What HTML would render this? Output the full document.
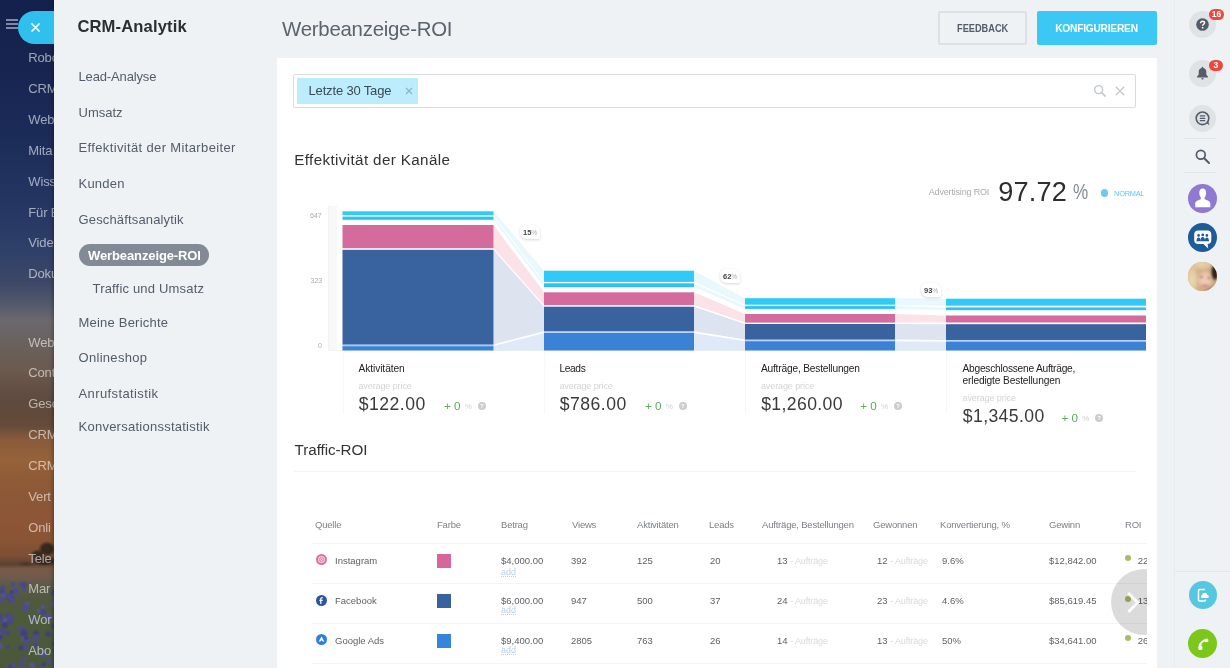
<!DOCTYPE html>
<html lang="de">
<head>
<meta charset="utf-8">
<title>CRM-Analytik</title>
<style>
*{box-sizing:border-box;margin:0;padding:0}
html,body{width:1230px;height:668px;overflow:hidden}
html{background:#eef2f4}
body{font-family:"Liberation Sans",sans-serif;background:#eef2f4;position:relative;color:#333;filter:blur(.45px)}
.abs{position:absolute}
.t{position:absolute;white-space:nowrap;line-height:1}
/* left strip */
#strip{left:0;top:0;width:58px;height:668px;overflow:hidden;
background:radial-gradient(circle at 24px 633px,#3f3f7c 0,#3f3f7c 1.5px,rgba(74,74,140,0) 4.9px),
radial-gradient(circle at 24px 659px,#4a4a8c 0,#4a4a8c 0.9px,rgba(74,74,140,0) 3.2px),
radial-gradient(circle at 26px 638px,#3f3f7c 0,#3f3f7c 0.9px,rgba(74,74,140,0) 3.1px),
radial-gradient(circle at 16px 591px,#4b4b90 0,#4b4b90 1.4px,rgba(74,74,140,0) 4.6px),
radial-gradient(circle at 33px 618px,#4a4a8c 0,#4a4a8c 1.1px,rgba(74,74,140,0) 3.8px),
radial-gradient(circle at 36px 638px,#4b4b90 0,#4b4b90 1.4px,rgba(74,74,140,0) 4.7px),
radial-gradient(circle at 1px 600px,#4b4b90 0,#4b4b90 1.0px,rgba(74,74,140,0) 3.3px),
radial-gradient(circle at 43px 612px,#454588 0,#454588 1.2px,rgba(74,74,140,0) 4.1px),
radial-gradient(circle at 28px 640px,#4b4b90 0,#4b4b90 1.2px,rgba(74,74,140,0) 3.9px),
radial-gradient(circle at 25px 608px,#4b4b90 0,#4b4b90 1.5px,rgba(74,74,140,0) 5.1px),
radial-gradient(circle at 39px 611px,#525298 0,#525298 1.0px,rgba(74,74,140,0) 3.3px),
radial-gradient(circle at -0px 633px,#4b4b90 0,#4b4b90 0.9px,rgba(74,74,140,0) 3.0px),
radial-gradient(circle at 47px 617px,#4b4b90 0,#4b4b90 1.5px,rgba(74,74,140,0) 5.0px),
radial-gradient(circle at 10px 666px,#3f3f7c 0,#3f3f7c 0.8px,rgba(74,74,140,0) 2.8px),
radial-gradient(circle at 55px 618px,#454588 0,#454588 0.9px,rgba(74,74,140,0) 2.9px),
radial-gradient(circle at 43px 607px,#525298 0,#525298 0.9px,rgba(74,74,140,0) 2.9px),
radial-gradient(circle at -1px 619px,#454588 0,#454588 1.5px,rgba(74,74,140,0) 4.9px),
radial-gradient(circle at 12px 592px,#3f3f7c 0,#3f3f7c 0.9px,rgba(74,74,140,0) 2.8px),
radial-gradient(circle at 8px 633px,#454588 0,#454588 1.1px,rgba(74,74,140,0) 3.8px),
radial-gradient(circle at 55px 651px,#3f3f7c 0,#3f3f7c 1.1px,rgba(74,74,140,0) 3.7px),
radial-gradient(circle at 5px 620px,#525298 0,#525298 1.0px,rgba(74,74,140,0) 3.2px),
radial-gradient(circle at 48px 670px,#4b4b90 0,#4b4b90 1.2px,rgba(74,74,140,0) 4.1px),
radial-gradient(circle at 10px 618px,#4a4a8c 0,#4a4a8c 1.4px,rgba(74,74,140,0) 4.8px),
radial-gradient(circle at 4px 671px,#525298 0,#525298 1.0px,rgba(74,74,140,0) 3.2px),
radial-gradient(circle at -1px 637px,#3f3f7c 0,#3f3f7c 1.4px,rgba(74,74,140,0) 4.7px),
radial-gradient(circle at 2px 591px,#454588 0,#454588 1.2px,rgba(74,74,140,0) 4.1px),
radial-gradient(circle at -1px 616px,#454588 0,#454588 1.3px,rgba(74,74,140,0) 4.2px),
radial-gradient(circle at 54px 626px,#3f3f7c 0,#3f3f7c 1.2px,rgba(74,74,140,0) 4.1px),
radial-gradient(circle at 9px 597px,#4a4a8c 0,#4a4a8c 1.5px,rgba(74,74,140,0) 4.9px),
radial-gradient(circle at 12px 600px,#4a4a8c 0,#4a4a8c 1.3px,rgba(74,74,140,0) 4.5px),
radial-gradient(circle at 9px 668px,#4a4a8c 0,#4a4a8c 1.4px,rgba(74,74,140,0) 4.8px),
radial-gradient(circle at 3px 587px,#4a4a8c 0,#4a4a8c 0.9px,rgba(74,74,140,0) 3.0px),
radial-gradient(circle at 54px 604px,#525298 0,#525298 1.3px,rgba(74,74,140,0) 4.4px),
radial-gradient(circle at 22px 664px,#4a4a8c 0,#4a4a8c 1.2px,rgba(74,74,140,0) 3.9px),
radial-gradient(circle at 8px 647px,#454588 0,#454588 0.9px,rgba(74,74,140,0) 2.9px),
radial-gradient(circle at 26px 641px,#4b4b90 0,#4b4b90 1.3px,rgba(74,74,140,0) 4.2px),
radial-gradient(circle at 14px 665px,#4b4b90 0,#4b4b90 1.0px,rgba(74,74,140,0) 3.2px),
radial-gradient(circle at 2px 620px,#4b4b90 0,#4b4b90 1.0px,rgba(74,74,140,0) 3.3px),
radial-gradient(circle at 8px 616px,#454588 0,#454588 1.2px,rgba(74,74,140,0) 4.1px),
radial-gradient(circle at 3px 595px,#525298 0,#525298 1.1px,rgba(74,74,140,0) 3.8px),
radial-gradient(circle at 36px 645px,#454588 0,#454588 1.2px,rgba(74,74,140,0) 4.1px),
radial-gradient(circle at 32px 665px,#525298 0,#525298 1.2px,rgba(74,74,140,0) 3.8px),
radial-gradient(circle at 39px 669px,#4b4b90 0,#4b4b90 0.8px,rgba(74,74,140,0) 2.8px),
radial-gradient(circle at 26px 648px,#4b4b90 0,#4b4b90 1.0px,rgba(74,74,140,0) 3.5px),
radial-gradient(circle at 2px 632px,#454588 0,#454588 1.3px,rgba(74,74,140,0) 4.5px),
radial-gradient(circle at 44px 664px,#3f3f7c 0,#3f3f7c 1.1px,rgba(74,74,140,0) 3.5px),
radial-gradient(circle at 50px 661px,#4b4b90 0,#4b4b90 1.1px,rgba(74,74,140,0) 3.7px),
radial-gradient(circle at 48px 634px,#3f3f7c 0,#3f3f7c 1.3px,rgba(74,74,140,0) 4.2px),
radial-gradient(circle at 20px 584px,#4b4b90 0,#4b4b90 0.9px,rgba(74,74,140,0) 2.9px),
radial-gradient(circle at 35px 671px,#525298 0,#525298 1.4px,rgba(74,74,140,0) 4.8px),
radial-gradient(circle at 21px 648px,#3f3f7c 0,#3f3f7c 1.2px,rgba(74,74,140,0) 4.1px),
radial-gradient(circle at 25px 631px,#4a4a8c 0,#4a4a8c 1.2px,rgba(74,74,140,0) 3.9px),
radial-gradient(circle at -0px 637px,#454588 0,#454588 1.2px,rgba(74,74,140,0) 3.9px),
radial-gradient(circle at 54px 593px,#3f3f7c 0,#3f3f7c 1.4px,rgba(74,74,140,0) 4.6px),
radial-gradient(circle at 13px 584px,#4a4a8c 0,#4a4a8c 1.0px,rgba(74,74,140,0) 3.4px),
radial-gradient(circle at 10px 598px,#3f3f7c 0,#3f3f7c 1.5px,rgba(74,74,140,0) 4.9px),
radial-gradient(circle at 27px 604px,#525298 0,#525298 1.1px,rgba(74,74,140,0) 3.7px),
radial-gradient(circle at 10px 621px,#454588 0,#454588 1.4px,rgba(74,74,140,0) 4.6px),
radial-gradient(circle at 49px 617px,#525298 0,#525298 1.2px,rgba(74,74,140,0) 4.1px),
radial-gradient(circle at 10px 595px,#4b4b90 0,#4b4b90 1.1px,rgba(74,74,140,0) 3.5px),
radial-gradient(circle at 39px 668px,#454588 0,#454588 1.0px,rgba(74,74,140,0) 3.4px),
radial-gradient(circle at 5px 625px,#3f3f7c 0,#3f3f7c 1.5px,rgba(74,74,140,0) 4.9px),
radial-gradient(circle at 20px 629px,#4a4a8c 0,#4a4a8c 1.3px,rgba(74,74,140,0) 4.3px),
radial-gradient(circle at 24px 590px,#4a4a8c 0,#4a4a8c 0.8px,rgba(74,74,140,0) 2.8px),
radial-gradient(circle at 0px 646px,#525298 0,#525298 1.2px,rgba(74,74,140,0) 4.1px),
radial-gradient(circle at 36px 633px,#3f3f7c 0,#3f3f7c 1.3px,rgba(74,74,140,0) 4.2px),
radial-gradient(circle at 24px 585px,#454588 0,#454588 1.4px,rgba(74,74,140,0) 4.7px),
radial-gradient(circle at 43px 654px,#4b4b90 0,#4b4b90 1.5px,rgba(74,74,140,0) 5.1px),
radial-gradient(circle at 24px 639px,#525298 0,#525298 1.3px,rgba(74,74,140,0) 4.3px),
radial-gradient(circle at 54px 644px,#3f3f7c 0,#3f3f7c 1.0px,rgba(74,74,140,0) 3.2px),
radial-gradient(ellipse 9px 8px at 47px 549px,#35291f 0,#35291f 55%,rgba(53,41,31,0) 100%),radial-gradient(ellipse 8px 6px at 38px 555px,#382b20 0,#382b20 50%,rgba(53,41,31,0) 100%),radial-gradient(ellipse 14px 5px at 44px 561px,#33271e 0,#33271e 55%,rgba(53,41,31,0) 100%),radial-gradient(ellipse 10px 3px at 26px 564px,#4a3527 0,rgba(74,53,39,0) 100%),
linear-gradient(180deg,#13204b 0px,#16244f 60px,#1b2b58 130px,#243562 200px,#2e3f68 250px,#3f4967 285px,#555a6c 305px,#6b686e 320px,#6a625f 340px,#6b5a4e 370px,#5e4a3e 400px,#644a39 425px,#895b3b 440px,#96623a 460px,#8f5b37 480px,#8c5736 500px,#8d5636 520px,#895435 540px,#7d4e34 556px,#5c4131 564px,#7a5a48 569px,#6e5b4c 578px,#5b5a48 586px,#51583f 600px,#4d5b3a 625px,#4a583a 668px)}
#strip .m{color:rgba(255,255,255,.58);font-size:13px;left:28.3px;letter-spacing:-.15px}
#panel{left:54px;top:0;width:1176px;height:668px;background:#eef2f4;box-shadow:-1px 0 4px rgba(0,0,0,.32)}
/* nav */
.nav{font-size:13px;color:#535c69;left:78.5px}
/* card */
#card{left:277px;top:58px;width:880px;height:620px;background:#fff}

.bd{background:#fff;border-radius:5px 7px 2px 7px;box-shadow:0 1px 3px rgba(0,0,0,.16)}
.ml{font-size:10.2px;color:#222}
.ap{font-size:9px;color:#d2d4d6;letter-spacing:-.09px}
.mv{font-size:17.6px;color:#3a3a3a}
.pl{font-size:11.7px;color:#5aab5a}
.pc{font-size:8px;color:#d0d0d0}
.q{width:8px;height:8px;border-radius:50%;background:#ccc;color:#fff;font-size:6px;line-height:8px;text-align:center;font-weight:bold}
.th{font-size:9.5px;color:#7d8186;letter-spacing:-.2px}
.td{font-size:9.5px;color:#5c5f63}
.lt{color:#d9dadb;font-size:9px;letter-spacing:-.15px}
.ad{font-size:9px;color:#b9d0e8;border-bottom:1px dotted #b9d0e8;line-height:.9}
.gd{width:6px;height:6px;border-radius:50%;background:#a6bc64}

.rc{width:27px;height:27px;border-radius:50%;background:#dfe3e6}
.bg{width:15px;height:10.5px;border-radius:5.5px;background:#f0473a;color:#fff;font-size:8.600px;font-weight:bold;line-height:10.5px;text-align:center}
</style>
</head>
<body>
<div id="strip" class="abs">
  <div class="t m" style="top:51.2px">Robo</div>
  <div class="t m" style="top:82.1px">CRM</div>
  <div class="t m" style="top:112.9px">Web</div>
  <div class="t m" style="top:143.8px">Mita</div>
  <div class="t m" style="top:174.6px">Wiss</div>
  <div class="t m" style="top:205.5px">Für E</div>
  <div class="t m" style="top:236.3px">Vide</div>
  <div class="t m" style="top:267.2px">Doku</div>
  <div class="t m" style="top:336px">Web</div>
  <div class="t m" style="top:366.4px">Cont</div>
  <div class="t m" style="top:397.2px">Gesc</div>
  <div class="t m" style="top:428px">CRM</div>
  <div class="t m" style="top:459px">CRM</div>
  <div class="t m" style="top:489.8px">Vert</div>
  <div class="t m" style="top:520.6px">Onli</div>
  <div class="t m" style="top:551.5px">Tele</div>
  <div class="t m" style="top:581.9px">Mar</div>
  <div class="t m" style="top:612.7px">Wor</div>
  <div class="t m" style="top:643.5px">Abo</div>
</div>
<div id="panel" class="abs"></div>
<!-- hamburger + close pill -->
<div class="abs" style="left:6px;top:19px;width:12px;height:2px;background:#7f88a8"></div>
<div class="abs" style="left:6px;top:23px;width:12px;height:2px;background:#7f88a8"></div>
<div class="abs" style="left:6px;top:27px;width:12px;height:2px;background:#7f88a8"></div>
<div class="abs" style="left:18px;top:11px;width:40px;height:33px;border-radius:16.5px 0 0 16.5px;background:#2fc0ee;clip-path:inset(0 4px 0 0)"></div>
<svg class="abs" style="left:31px;top:23px" width="9" height="9" viewBox="0 0 9 9"><path d="M1 1L8 8M8 1L1 8" stroke="#fff" stroke-width="1.7" stroke-linecap="round"/></svg>

<!-- nav -->
<div class="t" style="left:77.4px;top:19px;font-size:16.6px;font-weight:bold;color:#2b2e33;letter-spacing:.13px">CRM-Analytik</div>
<div class="t nav" style="top:69.6px;letter-spacing:-.14px">Lead-Analyse</div>
<div class="t nav" style="top:105.5px">Umsatz</div>
<div class="t nav" style="top:141.1px;letter-spacing:.36px">Effektivität der Mitarbeiter</div>
<div class="t nav" style="top:177.4px;letter-spacing:.23px">Kunden</div>
<div class="t nav" style="top:212.8px;letter-spacing:.15px">Geschäftsanalytik</div>
<div class="abs" style="left:78.5px;top:244px;width:130.3px;height:22px;border-radius:11px;background:#828a96"></div>
<div class="t nav" style="left:88px;top:248.6px;color:#fff;font-weight:bold;letter-spacing:-.11px">Werbeanzeige-ROI</div>
<div class="t nav" style="left:92.5px;top:282.4px;letter-spacing:.18px">Traffic und Umsatz</div>
<div class="t nav" style="top:315.6px;letter-spacing:.21px">Meine Berichte</div>
<div class="t nav" style="top:350.8px;letter-spacing:.3px">Onlineshop</div>
<div class="t nav" style="top:386.8px;letter-spacing:.39px">Anrufstatistik</div>
<div class="t nav" style="top:419.800px;letter-spacing:.25px">Konversationsstatistik</div>

<!-- header -->
<div class="t" style="left:282.1px;top:18.6px;font-size:20.4px;color:#5b636e;letter-spacing:-.25px">Werbeanzeige-ROI</div>
<div class="abs" style="left:938px;top:11px;width:89px;height:33.500px;border:2px solid #dde1e4;border-radius:2px"></div>
<div class="t" style="left:957.3px;top:23.9px;font-size:10.2px;font-weight:bold;color:#535c69;transform:scaleX(.905);transform-origin:0 0">FEEDBACK</div>
<div class="abs" style="left:1037px;top:11px;width:120px;height:33.5px;background:#3bc8f5;border-radius:2px"></div>
<div class="t" style="left:1055.2px;top:23.9px;font-size:10.2px;font-weight:bold;color:#fff;letter-spacing:-.22px">KONFIGURIEREN</div>

<div id="card" class="abs"></div>

<!-- filter -->
<div class="abs" style="left:293px;top:74px;width:843px;height:34px;border:1px solid #d8dce0;border-radius:2px;background:#fff"></div>
<div class="abs" style="left:297px;top:78px;width:121px;height:26px;background:#bcedfc"></div>
<div class="t" style="left:308.500px;top:84px;font-size:13px;color:#3d4854;letter-spacing:-.16px">Letzte 30 Tage</div>
<svg class="abs" style="left:405px;top:87px" width="8" height="8" viewBox="0 0 8 8"><path d="M1 1L7 7M7 1L1 7" stroke="#8eb7c9" stroke-width="1.4"/></svg>
<svg class="abs" style="left:1093px;top:84px" width="14" height="14" viewBox="0 0 14 14"><circle cx="5.6" cy="5.6" r="4" fill="none" stroke="#c3c8cd" stroke-width="1.4"/><path d="M8.6 8.6L12.6 12.6" stroke="#c3c8cd" stroke-width="1.6"/></svg>
<svg class="abs" style="left:1115px;top:86px" width="10" height="10" viewBox="0 0 10 10"><path d="M0.8 0.8L9.2 9.2M9.2 0.8L0.8 9.2" stroke="#c3c8cd" stroke-width="1.3"/></svg>

<div class="t" style="left:294.3px;top:152.3px;font-size:15.2px;color:#333;letter-spacing:.37px">Effektivität der Kanäle</div>

<!-- ROI -->
<div class="t" style="left:928.8px;top:188.2px;font-size:9px;color:#a9acaf;letter-spacing:-.18px">Advertising ROI</div>
<div class="t" style="left:998.2px;top:178.3px;font-size:27.1px;color:#2e2e2e;letter-spacing:.2px">97.72</div>
<div class="t" style="left:1072.6px;top:181.2px;font-size:21.9px;color:#858a90;transform:scaleX(.78);transform-origin:0 0">%</div>
<div class="abs" style="left:1100.5px;top:189.4px;width:7.2px;height:7.2px;border-radius:50%;background:#6ccaf0"></div>
<div class="t" style="left:1114.100px;top:189.5px;font-size:7.4px;color:#5ec4ee;letter-spacing:-.26px">NORMAL</div>

<!-- chart -->
<svg class="abs" style="left:277px;top:195px" width="880" height="230" viewBox="277 195 880 230">
  <!-- axis -->
  <rect x="328" y="206" width="9" height="144.500" fill="#f8f8f9"/><path d="M328.5 206V350.500H1146" fill="none" stroke="#f1f2f4" stroke-width="1"/>
  <!-- connectors 1->2 -->
  <polygon points="493.5,211.3 544,270.7 544,281.9 493.5,215.3" fill="#e9f8fd"/>
  <polygon points="493.5,216.6 544,283.3 544,287.1 493.5,219.8" fill="#e9f8fd"/>
  <polygon points="493.5,225 544,292.3 544,305.1 493.5,248.2" fill="#fbe1e8"/>
  <polygon points="493.5,249.8 544,306.7 544,331.2 493.5,344.4" fill="#dee4ef"/>
  <polygon points="493.5,346 544,333 544,350.5 493.5,350.5" fill="#e0e9f8"/>
  <!-- connectors 2->3 -->
  <polygon points="694,270.7 745,298.2 745,304.7 694,281.9" fill="#e9f8fd"/>
  <polygon points="694,283.3 745,306.1 745,308.9 694,287.1" fill="#e9f8fd"/>
  <polygon points="694,292.3 745,314 745,322.6 694,305.1" fill="#fbe1e8"/>
  <polygon points="694,306.7 745,324 745,339.5 694,331.2" fill="#dee4ef"/>
  <polygon points="694,333 745,341.3 745,350.5 694,350.5" fill="#e0e9f8"/>
  <!-- connectors 3->4 -->
  <polygon points="895,298.2 946,298.7 946,305.7 895,304.7" fill="#e9f8fd"/>
  <polygon points="895,306.1 946,307.4 946,310.2 895,308.9" fill="#e9f8fd"/>
  <polygon points="895,314 946,315.5 946,322.5 895,322.6" fill="#fbe1e8"/>
  <polygon points="895,324 946,324.2 946,340 895,339.5" fill="#dee4ef"/>
  <polygon points="895,341.3 946,341.7 946,350.5 895,350.5" fill="#e0e9f8"/>
  <rect x="342.500" y="344" width="151" height="3" fill="#a3cbf8"/>
  <rect x="544" y="331" width="150" height="3" fill="#b9d6f9"/>
  <rect x="745" y="339" width="150" height="3" fill="#b9d6f9"/>
  <rect x="946" y="339.500" width="200" height="3" fill="#b9d6f9"/>
  <!-- bar 1 -->
  <rect x="342.5" y="211.3" width="151" height="4" fill="#2fcaf7"/>
  <rect x="342.5" y="216.6" width="151" height="3.2" fill="#2bc3f0"/>
  <rect x="342.5" y="225" width="151" height="23.2" fill="#d36c9c"/>
  <rect x="342.5" y="249.8" width="151" height="94.6" fill="#38639f"/>
  <rect x="342.5" y="346.3" width="151" height="4.2" fill="#3b82d7"/>
  <!-- bar 2 -->
  <rect x="544" y="270.7" width="150" height="11.2" fill="#2fcaf7"/>
  <rect x="544" y="283.3" width="150" height="3.8" fill="#2bc3f0"/>
  <rect x="544" y="292.3" width="150" height="12.8" fill="#d36c9c"/>
  <rect x="544" y="306.7" width="150" height="24.5" fill="#38639f"/>
  <rect x="544" y="333" width="150" height="17.5" fill="#3b82d7"/>
  <!-- bar 3 -->
  <rect x="745" y="298.2" width="150" height="6.5" fill="#2fcaf7"/>
  <rect x="745" y="306.1" width="150" height="2.8" fill="#2bc3f0"/>
  <rect x="745" y="314" width="150" height="8.6" fill="#d36c9c"/>
  <rect x="745" y="324" width="150" height="15.5" fill="#38639f"/>
  <rect x="745" y="341.3" width="150" height="9.2" fill="#3b82d7"/>
  <!-- bar 4 -->
  <rect x="946" y="298.7" width="200" height="7" fill="#2fcaf7"/>
  <rect x="946" y="307.4" width="200" height="2.8" fill="#2bc3f0"/>
  <rect x="946" y="315.5" width="200" height="7" fill="#d36c9c"/>
  <rect x="946" y="324.2" width="200" height="15.8" fill="#38639f"/>
  <rect x="946" y="341.7" width="200" height="8.8" fill="#3b82d7"/>
</svg>
<div class="t" style="left:310px;top:212px;font-size:7px;color:#a8abae">647</div>
<div class="t" style="left:310.500px;top:277.2px;font-size:7px;color:#a8abae">323</div>
<div class="t" style="left:318px;top:342px;font-size:7px;color:#a8abae">0</div>

<!-- pct badges -->
<div class="abs bd" style="left:519.5px;top:225px;width:20px;height:14px"></div>
<div class="t" style="left:523px;top:229px;font-size:7.5px;font-weight:bold;color:#444">15<span style="font-weight:normal;color:#aaa;font-size:6.5px">%</span></div>
<div class="abs bd" style="left:719.5px;top:269px;width:20px;height:14px"></div>
<div class="t" style="left:723px;top:273px;font-size:7.5px;font-weight:bold;color:#444">62<span style="font-weight:normal;color:#aaa;font-size:6.5px">%</span></div>
<div class="abs bd" style="left:920.5px;top:283px;width:20px;height:14px"></div>
<div class="t" style="left:924px;top:287px;font-size:7.5px;font-weight:bold;color:#444">93<span style="font-weight:normal;color:#aaa;font-size:6.5px">%</span></div>

<!-- metric dividers -->
<div class="abs" style="left:343px;top:352px;width:1px;height:62px;background:#f6f7f8"></div>
<div class="abs" style="left:544px;top:352px;width:1px;height:62px;background:#f6f7f8"></div>
<div class="abs" style="left:745px;top:352px;width:1px;height:62px;background:#f6f7f8"></div>
<div class="abs" style="left:946px;top:352px;width:1px;height:62px;background:#f6f7f8"></div>

<!-- metrics -->
<div class="t ml" style="left:358.4px;top:363.8px;letter-spacing:-0.06px">Aktivitäten</div>
<div class="t ap" style="left:358.4px;top:382.3px">average price</div>
<div class="t mv" style="left:358.7px;top:395.5px;letter-spacing:0.5px">$122.00</div>
<div class="t pl" style="left:444px;top:400.3px">+ 0</div><div class="t pc" style="left:464.8px;top:402.6px">%</div><div class="abs q" style="left:477.8px;top:402.4px">?</div>

<div class="t ml" style="left:559.4px;top:363.8px;letter-spacing:-0.35px">Leads</div>
<div class="t ap" style="left:559.4px;top:382.3px">average price</div>
<div class="t mv" style="left:559.6999999999999px;top:395.5px;letter-spacing:0.5px">$786.00</div>
<div class="t pl" style="left:645px;top:400.3px">+ 0</div><div class="t pc" style="left:665.8px;top:402.6px">%</div><div class="abs q" style="left:678.8px;top:402.4px">?</div>

<div class="t ml" style="left:760.9px;top:363.8px;letter-spacing:-0.19px">Aufträge, Bestellungen</div>
<div class="t ap" style="left:760.9px;top:382.3px">average price</div>
<div class="t mv" style="left:761.1999999999999px;top:395.5px;letter-spacing:0.39px">$1,260.00</div>
<div class="t pl" style="left:860.2px;top:400.3px">+ 0</div><div class="t pc" style="left:881.0px;top:402.6px">%</div><div class="abs q" style="left:894.0px;top:402.4px">?</div>

<div class="t ml" style="left:962.5px;top:363.8px;letter-spacing:-0.24px">Abgeschlossene Aufträge,</div>
<div class="t ml" style="left:962.5px;top:375.6px;letter-spacing:-0.14px">erledigte Bestellungen</div>
<div class="t ap" style="left:962.5px;top:394.3px">average price</div>
<div class="t mv" style="left:962.8px;top:407.5px;letter-spacing:0.39px">$1,345.00</div>
<div class="t pl" style="left:1061.4px;top:412.3px">+ 0</div><div class="t pc" style="left:1082.2px;top:414.6px">%</div><div class="abs q" style="left:1095.2px;top:414.4px">?</div>

<div class="t" style="left:294.6px;top:441.8px;font-size:15.2px;color:#333;letter-spacing:-.06px">Traffic-ROI</div>
<div class="abs" style="left:294px;top:471px;width:842px;height:1px;background:#f3f4f5"></div>

<!-- table -->
<div class="abs" id="tbl" style="left:306px;top:505px;width:840.5px;height:163px;overflow:hidden">
 <div class="abs" style="left:6px;top:38px;width:860px;height:1px;background:#f3f4f5"></div>
 <div class="abs" style="left:6px;top:78px;width:860px;height:1px;background:#f3f4f5"></div>
 <div class="abs" style="left:6px;top:118px;width:860px;height:1px;background:#f3f4f5"></div>
 <div class="abs" style="left:6px;top:158px;width:860px;height:1px;background:#f3f4f5"></div>
 <div class="t th" style="left:9px;top:15px">Quelle</div>
 <div class="t th" style="left:131px;top:15px">Farbe</div>
 <div class="t th" style="left:195px;top:15px">Betrag</div>
 <div class="t th" style="left:266px;top:15px">Views</div>
 <div class="t th" style="left:331px;top:15px">Aktivitäten</div>
 <div class="t th" style="left:403px;top:15px">Leads</div>
 <div class="t th" style="left:456px;top:15px">Aufträge, Bestellungen</div>
 <div class="t th" style="left:567px;top:15px">Gewonnen</div>
 <div class="t th" style="left:634px;top:15px">Konvertierung, %</div>
 <div class="t th" style="left:743px;top:15px">Gewinn</div>
 <div class="t th" style="left:819px;top:15px">ROI</div>

 <!-- row1 -->
 <svg class="abs" style="left:10px;top:49px" width="11" height="11" viewBox="0 0 11 11"><circle cx="5.5" cy="5.5" r="5.5" fill="#e0709f"/><rect x="2.8" y="2.8" width="5.4" height="5.4" rx="1.6" fill="none" stroke="#fff" stroke-width="0.9"/><circle cx="5.5" cy="5.5" r="1.1" fill="none" stroke="#fff" stroke-width="0.8"/></svg>
 <div class="t td" style="left:29px;top:50.8px">Instagram</div>
 <div class="abs" style="left:131px;top:49px;width:14px;height:14px;background:#d9669b"></div>
 <div class="t td" style="left:195px;top:50.8px">$4,000.00</div><div class="t ad" style="left:195px;top:62.5px">add</div>
 <div class="t td" style="left:265px;top:50.8px">392</div>
 <div class="t td" style="left:331px;top:50.8px">125</div>
 <div class="t td" style="left:404px;top:50.8px">20</div>
 <div class="t td" style="left:471px;top:50.8px">13 <span class="lt">- Aufträge</span></div>
 <div class="t td" style="left:571px;top:50.8px">12 <span class="lt">- Aufträge</span></div>
 <div class="t td" style="left:636px;top:50.8px">9.6%</div>
 <div class="t td" style="left:743px;top:50.8px">$12,842.00</div>
 <div class="abs gd" style="left:819px;top:50px"></div><div class="t td" style="left:831.7px;top:50.8px">22</div>
 <!-- row2 -->
 <svg class="abs" style="left:10px;top:90px" width="11" height="11" viewBox="0 0 11 11"><circle cx="5.5" cy="5.5" r="5.5" fill="#2c579b"/><path d="M6.9 3.2H6.2C5.6 3.2 5.4 3.5 5.4 4V4.8H6.8L6.6 6H5.4V9H4.2V6H3.4V4.8H4.2V3.9C4.2 2.8 4.9 2.2 5.9 2.2C6.4 2.2 6.8 2.25 6.9 2.27Z" fill="#fff"/></svg>
 <div class="t td" style="left:29px;top:91.4px">Facebook</div>
 <div class="abs" style="left:131px;top:89px;width:14px;height:14px;background:#38639f"></div>
 <div class="t td" style="left:195px;top:91.4px">$6,000.00</div><div class="t ad" style="left:195px;top:101px">add</div>
 <div class="t td" style="left:265px;top:91.4px">947</div>
 <div class="t td" style="left:331px;top:91.4px">500</div>
 <div class="t td" style="left:404px;top:91.4px">37</div>
 <div class="t td" style="left:471px;top:91.4px">24 <span class="lt">- Aufträge</span></div>
 <div class="t td" style="left:571px;top:91.4px">23 <span class="lt">- Aufträge</span></div>
 <div class="t td" style="left:636px;top:91.4px">4.6%</div>
 <div class="t td" style="left:743px;top:91.4px">$85,619.45</div>
 <div class="abs gd" style="left:819px;top:91px"></div><div class="t td" style="left:831.7px;top:91.4px">13</div>
 <!-- row3 -->
 <svg class="abs" style="left:10px;top:129px" width="11" height="11" viewBox="0 0 11 11"><circle cx="5.5" cy="5.5" r="5.5" fill="#2d7fe0"/><path d="M5.5 2.4L8.3 7.6H6.8L5.5 6.3L4.2 7.6H2.7Z" fill="#fff"/></svg>
 <div class="t td" style="left:29px;top:130.5px">Google Ads</div>
 <div class="abs" style="left:131px;top:129px;width:14px;height:14px;background:#3585dc"></div>
 <div class="t td" style="left:195px;top:130.5px">$9,400.00</div><div class="t ad" style="left:195px;top:141px">add</div>
 <div class="t td" style="left:265px;top:130.5px">2805</div>
 <div class="t td" style="left:331px;top:130.5px">763</div>
 <div class="t td" style="left:404px;top:130.5px">26</div>
 <div class="t td" style="left:471px;top:130.5px">14 <span class="lt">- Aufträge</span></div>
 <div class="t td" style="left:571px;top:130.5px">13 <span class="lt">- Aufträge</span></div>
 <div class="t td" style="left:636px;top:130.5px">50%</div>
 <div class="t td" style="left:743px;top:130.5px">$34,641.00</div>
 <div class="abs gd" style="left:819px;top:130px"></div><div class="t td" style="left:831.7px;top:130.5px">26</div>
 <!-- scroll arrow -->
 <div class="abs" style="left:804.600px;top:63.5px;width:66px;height:66px;border-radius:50%;background:rgba(0,0,0,.14)"></div>
 <svg class="abs" style="left:820px;top:86px" width="14" height="23" viewBox="0 0 14 23"><path d="M2.2 2.100L11.7 11.6L2.4 20.9" fill="none" stroke="#fff" stroke-width="2.8"/></svg>
</div>

<!-- right sidebar -->
<div class="abs" style="left:1174px;top:0;width:56px;height:668px;background:#eef2f4;border-left:1px solid #e7ebee"></div>
<div class="abs rc" style="left:1189px;top:11px"></div>
<svg class="abs" style="left:1195.5px;top:17.5px" width="13" height="13" viewBox="0 0 13 13"><circle cx="6.5" cy="6.5" r="6.3" fill="#535c69"/><path d="M4.6 5.2C4.6 3.9 5.5 3.3 6.6 3.3C7.7 3.3 8.5 4 8.5 4.9C8.5 6.2 6.6 6.3 6.6 7.7" fill="none" stroke="#fff" stroke-width="1.5"/><circle cx="6.6" cy="9.7" r="0.9" fill="#fff"/></svg>
<div class="abs bg" style="left:1209px;top:9px">16</div>
<div class="abs rc" style="left:1189px;top:60px"></div>
<svg class="abs" style="left:1196px;top:66px" width="13" height="15" viewBox="0 0 13 15"><path d="M6.5 0.8C7 0.8 7.3 1.1 7.3 1.6V2C9.2 2.4 10.3 3.9 10.3 5.8V8.6L12 10.8V11.5H1V10.8L2.7 8.6V5.8C2.7 3.9 3.8 2.4 5.7 2V1.6C5.7 1.1 6 0.8 6.5 0.8Z" fill="#535c69"/><path d="M5.2 12.3H7.8C7.8 13.1 7.2 13.6 6.5 13.6C5.8 13.6 5.2 13.1 5.2 12.3Z" fill="#535c69"/></svg>
<div class="abs bg" style="left:1209px;top:60px;width:14px">3</div>
<div class="abs rc" style="left:1189px;top:105px"></div>
<svg class="abs" style="left:1194px;top:110px" width="18" height="18" viewBox="0 0 18 18"><circle cx="8.5" cy="8.3" r="6.3" fill="none" stroke="#535c69" stroke-width="1.6"/><path d="M12.5 13L15.3 15.2L14.4 11.5Z" fill="#535c69"/><path d="M5.8 5.9H11.2M5.8 8.3H11.2M5.8 10.7H11.2" stroke="#535c69" stroke-width="1.3"/></svg>
<div class="abs" style="left:1184px;top:138px;width:32px;height:1px;background:#e2e6e9"></div>
<svg class="abs" style="left:1194px;top:148px" width="18" height="18" viewBox="0 0 18 18"><circle cx="6.8" cy="6.8" r="4.4" fill="none" stroke="#535c69" stroke-width="1.7"/><path d="M10.2 10.2L15 15" stroke="#535c69" stroke-width="2" stroke-linecap="round"/></svg>
<div class="abs" style="left:1184px;top:172px;width:32px;height:1px;background:#e2e6e9"></div>
<!-- purple user -->
<div class="abs" style="left:1187.5px;top:183.5px;width:29px;height:29px;border-radius:50%;background:#8f79d2"></div>
<svg class="abs" style="left:1187.5px;top:183.5px" width="29" height="29" viewBox="0 0 29 29"><path d="M14.7 4.600C16.900 4.600 18.100 6.300 18.100 8.800C18.100 10.800 17.500 12.500 16.600 13.500V15.300C18.900 16.100 22 17 22.300 19.500V23.200H7.200V19.500C7.500 17 10.600 16.100 12.800 15.300V13.500C11.900 12.500 11.300 10.800 11.300 8.800C11.300 6.300 12.500 4.600 14.700 4.600Z" fill="#fff"/></svg>
<!-- blue group -->
<div class="abs" style="left:1187.5px;top:223px;width:29px;height:29px;border-radius:50%;background:#1e5b9b"></div>
<svg class="abs" style="left:1187.5px;top:223px" width="29" height="29" viewBox="0 0 29 29"><path d="M10 7.600H19.600C21.800 7.600 23.300 9.200 23.300 11.300V17.300C23.300 19.400 21.800 21 19.600 21L20.200 25.600L15.500 21H10C7.800 21 6.200 19.400 6.200 17.300V11.300C6.200 9.200 7.800 7.600 10 7.600Z" fill="#fff"/><g fill="#1e5b9b"><circle cx="10.600" cy="12.400" r="1.350"/><path d="M8.500 18.200C8.500 15.700 9.300 14.400 10.600 14.400C11.900 14.400 12.700 15.700 12.700 18.200Z"/><circle cx="14.750" cy="11.900" r="1.450"/><path d="M12.500 18.200C12.500 15.400 13.400 14 14.750 14C16.100 14 17 15.400 17 18.200Z"/><circle cx="18.900" cy="12.400" r="1.350"/><path d="M16.800 18.200C16.800 15.700 17.600 14.400 18.900 14.400C20.200 14.400 21 15.700 21 18.200Z"/></g></svg>
<!-- avatar -->
<div class="abs" style="left:1188px;top:262px;width:28.5px;height:28.5px;border-radius:50%;overflow:hidden;background:#d8b78e">
 <div class="abs" style="left:-4px;top:-4px;width:37px;height:37px;filter:blur(1.1px);background:
 radial-gradient(ellipse 4px 9px at 31px 14px,#2e2220 0,#2e2220 70%,rgba(46,34,32,0) 100%),
 radial-gradient(ellipse 6px 2.500px at 21px 28px,#c47f76 0,rgba(196,127,118,0) 100%),
 radial-gradient(ellipse 2.200px 1.200px at 17.500px 19px,#6a4c42 0,rgba(106,76,66,0) 100%),
 radial-gradient(ellipse 2.200px 1.200px at 25px 20px,#6a4c42 0,rgba(106,76,66,0) 100%),
 radial-gradient(ellipse 8px 10.500px at 21px 22px,#efcdb7 0,#ebc4ab 65%,rgba(235,196,171,0) 100%),
 radial-gradient(ellipse 7px 16px at 8px 22px,#ecd9b8 0,#e3c9a2 60%,rgba(227,201,162,0) 100%),
 radial-gradient(ellipse 14px 7px at 17px 6px,#e9d4b0 0,#dfc39a 60%,rgba(223,195,154,0) 100%),
 radial-gradient(ellipse 8px 6px at 26px 33px,#9a7458 0,rgba(154,116,88,0) 100%),
 linear-gradient(90deg,#d5b58c,#c9a47c)"></div>
</div>
<!-- bottom -->
<div class="abs" style="left:1175px;top:571px;width:55px;height:1px;background:#e4e8eb"></div>
<div class="abs" style="left:1188.7px;top:580.800px;width:28.5px;height:28.5px;border-radius:50%;background:#55c7e1"></div>
<svg class="abs" style="left:1189px;top:581px" width="28" height="28" viewBox="0 0 28 28"><path d="M16 8.5H10.5C9.9 8.500 9.500 8.900 9.500 9.500V19C9.500 19.600 9.900 20 10.500 20H15.500C16.100 20 16.500 19.600 16.500 19V18.500" fill="none" stroke="#fff" stroke-width="1.5"/><path d="M13.500 17C12.400 17 11.800 16.300 11.800 15.500C11.800 14.700 12.400 14.100 13.200 14C13.400 12.700 14.400 11.800 15.700 11.800C17 11.800 18 12.700 18.200 13.900C19.200 14 19.900 14.600 19.900 15.500C19.900 16.400 19.200 17 18.200 17Z" fill="#fff"/></svg>
<div class="abs" style="left:1188.2px;top:629px;width:29px;height:29px;border-radius:50%;background:#7bc71a"></div>
<svg class="abs" style="left:1188.700px;top:629.5px" width="28" height="28" viewBox="0 0 28 28"><path d="M9.600 19.800C8.300 15.500 11.500 9.800 17.800 8.600C18.600 8.500 19 8.800 19.100 9.300L19.400 10.800C19.500 11.300 19.300 11.700 18.800 11.800L16.900 12.300C16.500 12.400 16.100 12.200 15.900 11.900L15.600 11.300C13.900 12 12.400 13.900 12.200 16L12.900 16.200C13.300 16.300 13.500 16.700 13.500 17.100L13.300 19C13.200 19.500 12.900 19.800 12.400 19.800L10.500 19.900C10 19.900 9.700 20 9.600 19.800Z" fill="#fff"/></svg>
</body>
</html>
